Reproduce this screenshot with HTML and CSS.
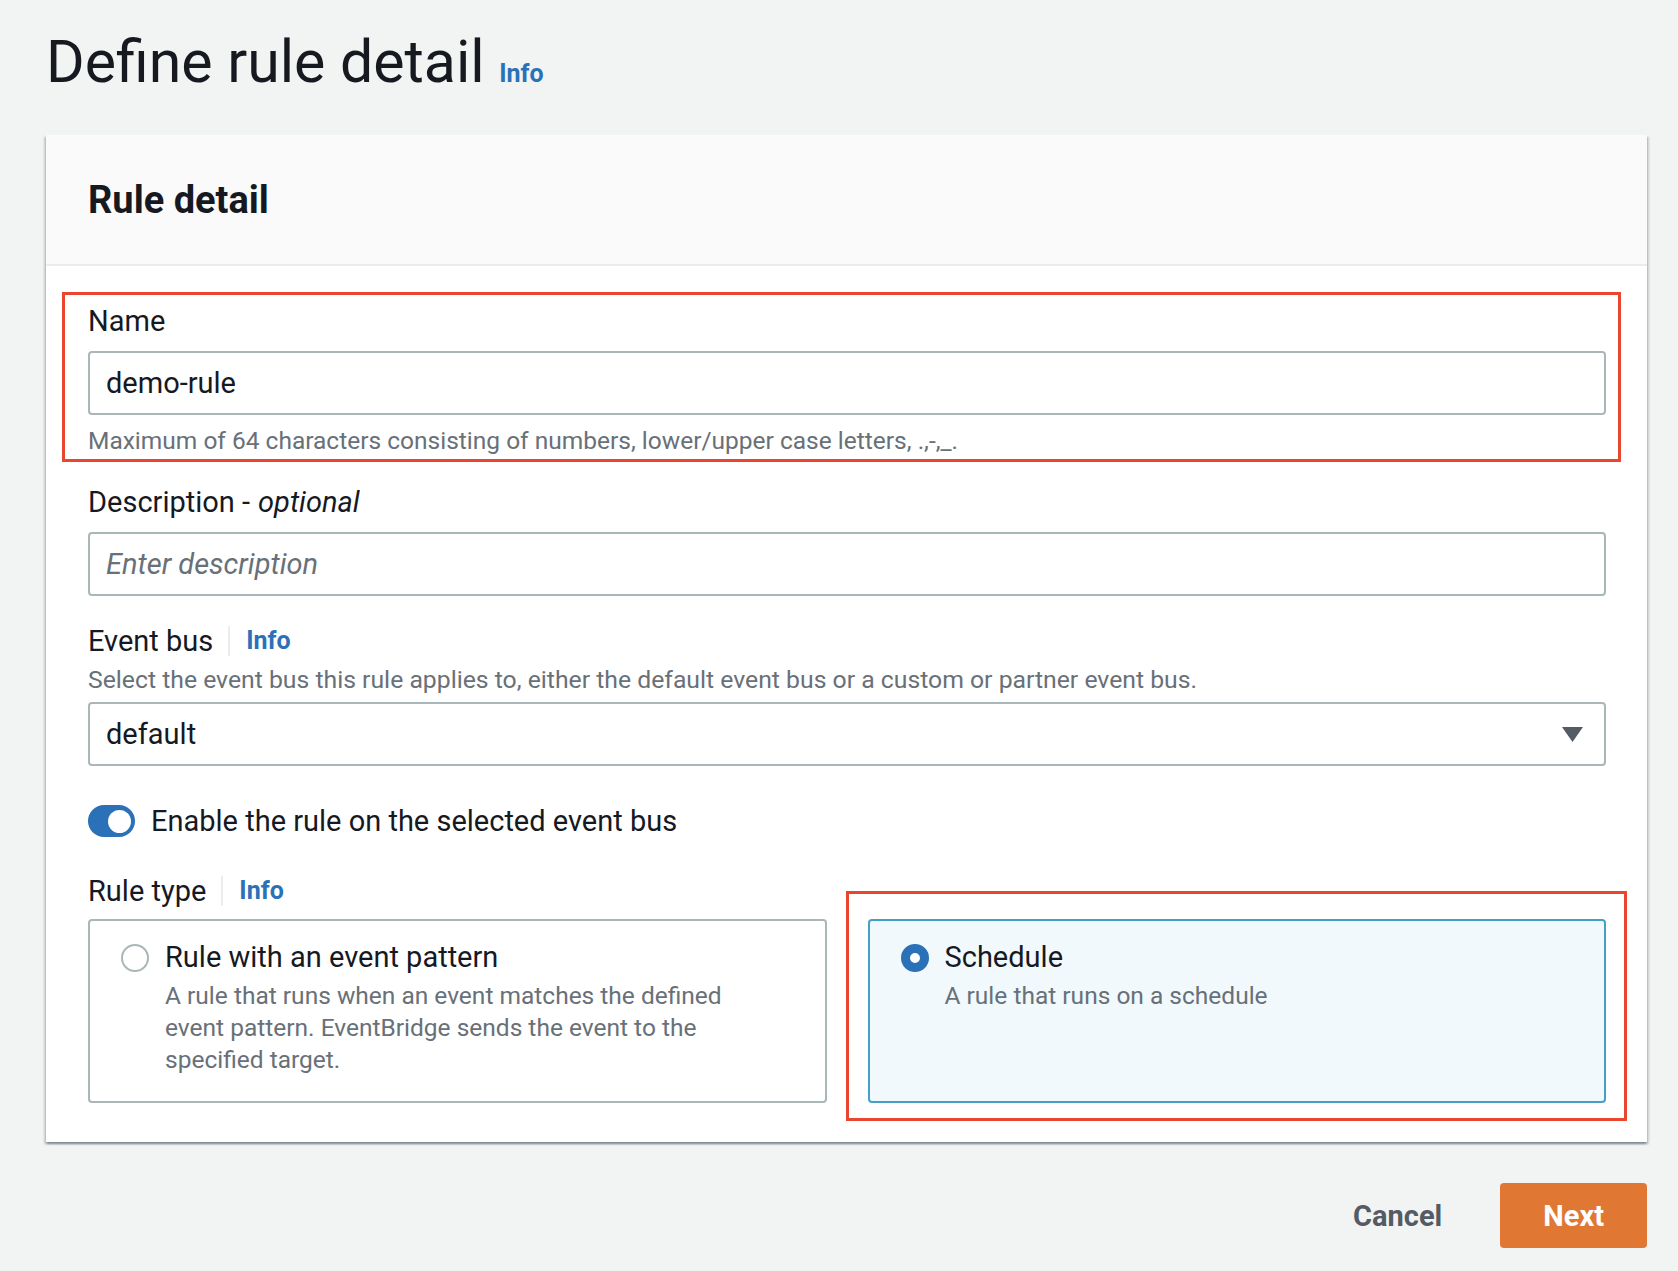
FILE: index.html
```html
<!DOCTYPE html>
<html lang="en">
<head>
    <meta charset="UTF-8">
    <meta name="viewport" content="width=device-width, initial-scale=1.0">
    <title>Define rule detail</title>
    <link rel="stylesheet" href="styles.css">
</head>
<body>
    <div class="page">
        <h1 class="page-title">Define rule detail <a href="#" class="info-link">Info</a></h1>

        <div class="container">
            <div class="container-header">
                <h2>Rule detail</h2>
            </div>
            <div class="container-body">
                <div class="field highlight highlight-name">
                    <label class="field-label" for="ruleName">Name</label>
                    <input class="text-input" id="ruleName" type="text" value="demo-rule">
                    <div class="field-hint">Maximum of 64 characters consisting of numbers, lower/upper case letters, .,-,_.</div>
                </div>

                <div class="field">
                    <label class="field-label" for="ruleDesc">Description - <i>optional</i></label>
                    <input class="text-input" id="ruleDesc" type="text" placeholder="Enter description">
                </div>

                <div class="field">
                    <div class="field-label">Event bus <span class="divider"></span><a href="#" class="info-link">Info</a></div>
                    <div class="field-desc">Select the event bus this rule applies to, either the default event bus or a custom or partner event bus.</div>
                    <div class="select">
                        <span>default</span>
                        <svg class="caret" width="21" height="15" viewBox="0 0 21 15"><path d="M0 0 H21 L10.5 15 Z" fill="#545b64"/></svg>
                    </div>
                </div>

                <div class="toggle-row">
                    <span class="toggle"><span class="knob"></span></span>
                    <span>Enable the rule on the selected event bus</span>
                </div>

                <div class="field">
                    <div class="field-label">Rule type <span class="divider"></span><a href="#" class="info-link">Info</a></div>
                    <div class="tiles">
                        <div class="tile">
                            <span class="radio"></span>
                            <div class="tile-text">
                                <div class="tile-title">Rule with an event pattern</div>
                                <div class="tile-desc">A rule that runs when an event matches the defined event pattern. EventBridge sends the event to the specified target.</div>
                            </div>
                        </div>
                        <div class="tile selected highlight highlight-tile">
                            <span class="radio checked"></span>
                            <div class="tile-text">
                                <div class="tile-title">Schedule</div>
                                <div class="tile-desc">A rule that runs on a schedule</div>
                            </div>
                        </div>
                    </div>
                </div>
            </div>
        </div>

        <div class="actions">
            <button class="btn-link">Cancel</button>
            <button class="btn-primary">Next</button>
        </div>
    </div>
</body>
</html>
```

FILE: styles.css
```css
body, html {
    margin: 0;
    padding: 0;
    background-color: #f2f3f3;
    font-family: Roboto, "Liberation Sans", sans-serif;
    color: #16191f;
}

.page {
    padding: 26px 31px 30px 46px;
}

.page-title {
    margin: 0 0 25px 0;
    font-size: 59px;
    line-height: 72px;
    font-weight: 400;
}

.info-link {
    color: #2a71b8;
    font-size: 25px;
    font-weight: 700;
    text-decoration: none;
}

.container {
    background-color: white;
    box-shadow: 0 2px 2px 0 rgba(0, 28, 36, 0.3), 2px 2px 2px 0 rgba(0, 28, 36, 0.15), -2px 2px 2px 0 rgba(0, 28, 36, 0.15);
}

.container-header {
    background-color: #fafafa;
    border-bottom: 2px solid #eaeded;
    padding: 43px 41px 42px 42px;
}

.container-header h2 {
    margin: 0;
    font-size: 38px;
    line-height: 44px;
    font-weight: 700;
}

.container-body {
    padding: 35px 41px 39px 42px;
    display: flex;
    flex-direction: column;
    gap: 25px;
}

.field {
    display: flex;
    flex-direction: column;
}

.field-label {
    display: flex;
    align-items: center;
    font-size: 29px;
    line-height: 40px;
}

.field-label i {
    margin-left: 8px;
}

.divider {
    display: inline-block;
    width: 2px;
    height: 30px;
    background-color: #eaeded;
    margin: 0 16px 0 15px;
}

.text-input {
    margin-top: 10px;
    height: 64px;
    box-sizing: border-box;
    border: 2px solid #aab7b8;
    border-radius: 4px;
    padding: 0 16px;
    font-family: inherit;
    font-size: 29px;
    color: #16191f;
    outline: none;
}

.text-input::placeholder {
    color: #687078;
    font-style: italic;
}

.field-hint, .field-desc {
    font-size: 24.5px;
    line-height: 32px;
    color: #687078;
}

.field-hint {
    margin-top: 10px;
}

.field-desc {
    margin-top: 3px;
    font-size: 24.75px;
}

.select {
    margin-top: 6px;
    height: 64px;
    box-sizing: border-box;
    border: 2px solid #aab7b8;
    border-radius: 4px;
    padding: 0 21px 0 16px;
    display: flex;
    align-items: center;
    justify-content: space-between;
    font-size: 29px;
}

.toggle-row {
    margin: 10px 0 5px 0;
    display: flex;
    align-items: center;
    gap: 16px;
    font-size: 29px;
    line-height: 40px;
}

.toggle {
    width: 47px;
    height: 32px;
    border-radius: 16px;
    background-color: #2a71b8;
    display: flex;
    align-items: center;
    justify-content: flex-end;
    padding-right: 4px;
    box-sizing: border-box;
}

.knob {
    width: 23px;
    height: 23px;
    border-radius: 50%;
    background-color: white;
}

.tiles {
    margin-top: 8px;
    display: grid;
    grid-template-columns: 1fr 1fr;
    gap: 41px;
}

.tile {
    border: 2px solid #aab7b8;
    border-radius: 4px;
    padding: 16px 30px 25px 31px;
    display: flex;
    align-items: flex-start;
    gap: 16px;
}

.tile.selected {
    border-color: #44a0c9;
    background-color: #f1f9fd;
}

.radio {
    flex: none;
    width: 28px;
    height: 28px;
    box-sizing: border-box;
    border: 2px solid #aab7b8;
    border-radius: 50%;
    margin-top: 7px;
    background-color: white;
}

.radio.checked {
    border: 9px solid #2a71b8;
}

.tile-title {
    font-size: 29px;
    line-height: 40px;
}

.tile-desc {
    margin-top: 3px;
    max-width: 620px;
    font-size: 24.5px;
    line-height: 32px;
    color: #687078;
}

.highlight {
    position: relative;
}

.highlight::after {
    content: "";
    position: absolute;
    border: 3px solid #e9462f;
    pointer-events: none;
}

.highlight-name::after {
    top: -9px;
    bottom: -5px;
    left: -26px;
    right: -15px;
}

.highlight-tile::after {
    top: -30px;
    bottom: -20px;
    left: -24px;
    right: -23px;
}

.actions {
    margin-top: 41px;
    display: flex;
    justify-content: flex-end;
    align-items: center;
    gap: 18px;
}

.btn-link, .btn-primary {
    font-family: inherit;
    font-size: 29px;
    font-weight: 700;
    border: none;
    border-radius: 4px;
    height: 65px;
    padding: 0 40px;
    cursor: pointer;
}

.btn-link {
    background: none;
    color: #545b64;
}

.btn-primary {
    padding: 0 43px;
    background-color: #e07833;
    color: white;
}
```
